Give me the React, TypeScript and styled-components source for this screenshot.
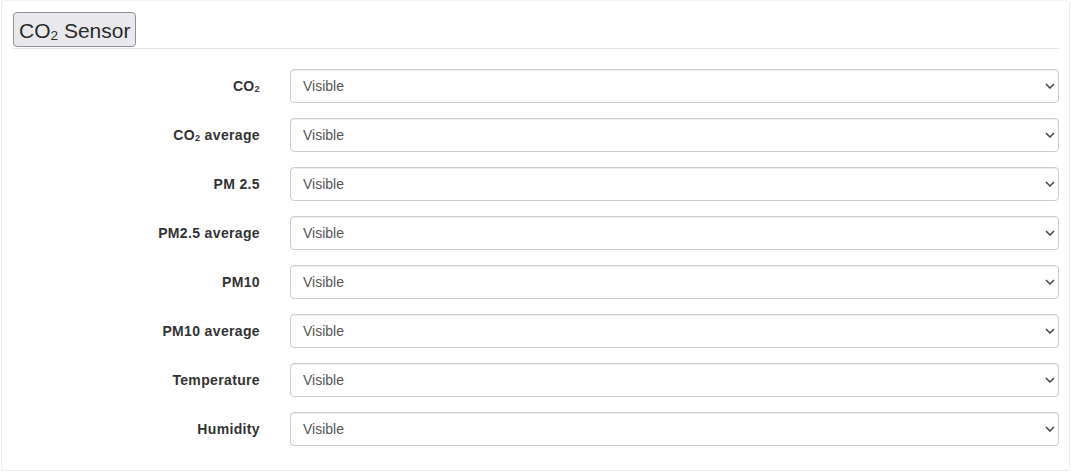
import React from "react";
import styled, { createGlobalStyle } from "styled-components";

const Global = createGlobalStyle`
  html, body { margin: 0; padding: 0; background: #fff; }
  body { font-family: "Liberation Sans", Arial, Helvetica, sans-serif; }
  * { box-sizing: border-box; }
`;

const Card = styled.div`
  margin-left: 1px;
  width: 1069px;
  height: 471px;
  border: 1px solid #ececec;
  border-top-color: #f2f2f2;
  border-radius: 4px;
  padding: 11px 10px 0 11px;
`;

const Header = styled.div`
  display: flex;
  align-items: flex-start;
  height: 37px;
  border-bottom: 1px solid #e5e5e5;
`;

const TitleButton = styled.button`
  height: 35px;
  padding: 1px 5px 0 5px;
  font-family: "Liberation Sans", Arial, Helvetica, sans-serif;
  font-size: 21px;
  color: #2b2b2b;
  background: #e9e9ed;
  border: 1px solid #8f8f9d;
  border-radius: 4px;
  line-height: 1;
`;

const Sub = styled.sub`
  font-size: 0.65em;
  vertical-align: -0.15em;
  line-height: 0;
`;

const Form = styled.div`
  display: grid;
  grid-template-columns: 247px 1fr;
  column-gap: 30px;
  row-gap: 15px;
  margin-top: 20px;
`;

const Label = styled.label`
  display: flex;
  align-items: center;
  justify-content: flex-end;
  height: 34px;
  font-size: 14px;
  font-weight: bold;
  letter-spacing: 0.35px;
  color: #333;
`;

const LabelText = styled.span`
  white-space: nowrap;
`;

const SelectWrap = styled.div`
  position: relative;
  height: 34px;
`;

const Select = styled.select`
  appearance: none;
  -webkit-appearance: none;
  width: 100%;
  height: 34px;
  padding: 0 24px 0 12px;
  font-family: "Liberation Sans", Arial, Helvetica, sans-serif;
  font-size: 14px;
  color: #555;
  background: #fff;
  border: 1px solid #ccc;
  border-radius: 4px;
  box-shadow: inset 0 1px 1px rgba(0, 0, 0, 0.075);
  outline: none;
`;

const Chevron = styled.svg`
  position: absolute;
  right: 4px;
  top: 14px;
  width: 10px;
  height: 6px;
  pointer-events: none;
`;

const rows: { key: string; label: React.ReactNode }[] = [
  { key: "co2", label: <>CO<Sub>2</Sub></> },
  { key: "co2avg", label: <>CO<Sub>2</Sub> average</> },
  { key: "pm25", label: "PM 2.5" },
  { key: "pm25avg", label: "PM2.5 average" },
  { key: "pm10", label: "PM10" },
  { key: "pm10avg", label: "PM10 average" },
  { key: "temp", label: "Temperature" },
  { key: "hum", label: "Humidity" },
];

export default function App() {
  return (
    <>
      <Global />
      <Card>
        <Header>
          <TitleButton type="button">
            CO<Sub>2</Sub> Sensor
          </TitleButton>
        </Header>
        <Form>
          {rows.map((r) => (
            <React.Fragment key={r.key}>
              <Label htmlFor={r.key}>
                <LabelText>{r.label}</LabelText>
              </Label>
              <SelectWrap>
                <Select id={r.key} defaultValue="visible">
                  <option value="visible">Visible</option>
                  <option value="hidden">Hidden</option>
                </Select>
                <Chevron viewBox="0 0 10 6">
                  <path d="M1 1 L5 5 L9 1" fill="none" stroke="#444" strokeWidth="1.5" />
                </Chevron>
              </SelectWrap>
            </React.Fragment>
          ))}
        </Form>
      </Card>
    </>
  );
}
